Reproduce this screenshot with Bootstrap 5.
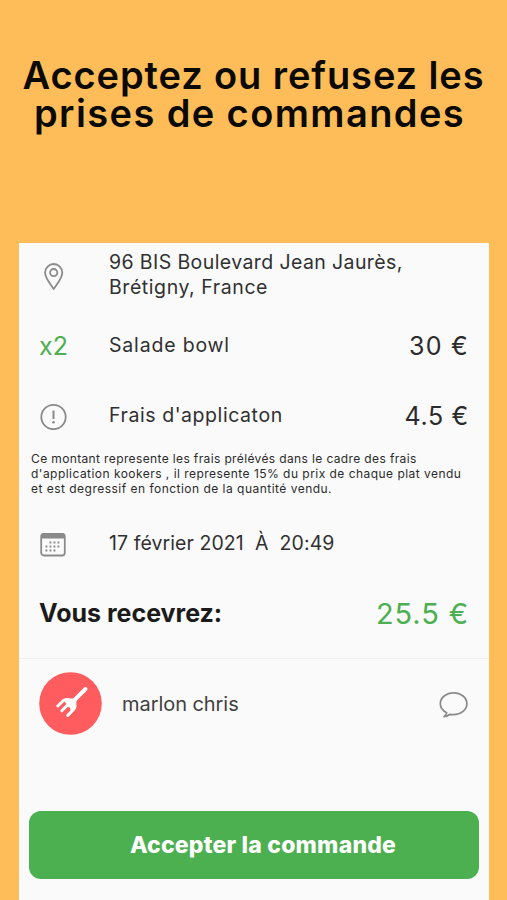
<!DOCTYPE html>
<html lang="fr">
<head>
<meta charset="utf-8">
<meta name="viewport" content="width=device-width, initial-scale=1">
<title>Commande</title>
<link href="https://cdn.jsdelivr.net/npm/bootstrap@5.3.0/dist/css/bootstrap.min.css" rel="stylesheet">
<style>
body{background:#ffbd59;font-family:Inter,"Open Sans",sans-serif;color:#303030;height:900px;overflow:hidden}
.headline{height:243px;padding-top:56px;font-size:38px;line-height:38px;font-weight:600;color:#0b0903;white-space:nowrap}
.headline .l1{letter-spacing:.9px}
.headline .l2{letter-spacing:1.4px;padding-right:8px}
.sheet{width:470px;height:657px;margin-left:19px;background:#fafafa;white-space:nowrap}
.line{height:70px;padding:0 20px 0 20px}
.lead-col{width:70px;flex:none}
.label{font-size:19.5px;line-height:25px}
.a1{letter-spacing:.4px}
.a2,.t2{letter-spacing:.57px}
.t1{letter-spacing:.82px}
.t3{letter-spacing:.08px}
.address{height:67px;padding-top:7px}
.qty{font-size:25px;padding-top:3px;color:#4caf50}
.price{font-size:25px;padding-top:3px;color:#2a2a2a}
.p1{letter-spacing:1.3px}
.p2{letter-spacing:.7px}
.note{padding:1px 0 0 12px;height:58px;font-size:12px;line-height:15px;color:#2b2b2b}
.n1{letter-spacing:.37px}
.n2{letter-spacing:.465px}
.n3{letter-spacing:.48px}
.total{height:80px;padding-bottom:8px}
.total-label{font-size:25px;font-weight:700;color:#1b1b1b}
.total-price{font-size:29px;letter-spacing:.9px;color:#4caf50}
.user{height:91px;padding-right:21px;padding-bottom:1px;border-top:1px solid #efefef}
.user-name{margin-left:20px;font-size:20px;letter-spacing:-.06px;color:#404040}
.accept{display:block;width:450px;height:68px;margin:62px 0 0 10px;border:0;border-radius:12px;background:#4caf50;color:#fff;font-size:23px;letter-spacing:.2px;font-weight:800;padding:0 0 0 18px}
.accept:hover{background:#4caf50;color:#fff}
svg{display:block;flex:none}
</style>
<script src="https://cdn.jsdelivr.net/npm/bootstrap@5.3.0/dist/js/bootstrap.bundle.min.js"></script>
</head>
<body>
<h1 class="headline text-center mb-0"><span class="l1 d-block">Acceptez ou refusez les</span><span class="l2 d-block">prises de commandes</span></h1>
<main class="sheet">
  <div class="line address d-flex">
    <div class="lead-col"><svg width="30" height="52" viewBox="0 0 30 52" fill="none" stroke="#8a8a8a" stroke-width="1.8"><path d="M14.7 39C11.5 34 6.1 28.5 6.1 22.6a8.6 8.6 0 0 1 17.2 0C23.3 28.5 17.9 34 14.7 39Z" stroke-linejoin="round"/><circle cx="14.7" cy="22.6" r="3.6"/></svg></div>
    <div class="label"><div class="a1">96 BIS Boulevard Jean Jaurès,</div><div class="a2">Brétigny, France</div></div>
  </div>
  <div class="line d-flex align-items-center">
    <div class="lead-col qty">x2</div><div class="label t1">Salade bowl</div><div class="price p1 ms-auto">30 €</div>
  </div>
  <div class="line d-flex align-items-center">
    <div class="lead-col"><svg width="30" height="30" viewBox="0 0 30 30" fill="none" stroke="#8a8a8a" stroke-width="1.8"><circle cx="14.5" cy="17" r="12.2"/><path d="M14.5 10.5v8.5" stroke-width="2"/><circle cx="14.5" cy="22.2" r="1.3" fill="#8a8a8a" stroke="none"/></svg></div>
    <div class="label t2">Frais d'applicaton</div><div class="price p2 ms-auto">4.5 €</div>
  </div>
  <div class="note"><div class="n1">Ce montant represente les frais prélévés dans le cadre des frais</div><div class="n2">d'application kookers , il represente 15% du prix de chaque plat vendu</div><div class="n3">et est degressif en fonction de la quantité vendu.</div></div>
  <div class="line d-flex align-items-center">
    <div class="lead-col"><svg width="30" height="30" viewBox="0 0 30 30"><rect x="2.2" y="5.9" width="23.6" height="21.6" rx="2.8" fill="none" stroke="#8a8a8a" stroke-width="1.8"/><path d="M2 10.5V8a3 3 0 0 1 3-3h18a3 3 0 0 1 3 3v2.5Z" fill="#8a8a8a"/><path d="M10.500 14.500h12M6.500 18.500h16M6.500 22.500h12" stroke="#8a8a8a" stroke-width="1.900" stroke-dasharray="1.900 2.100"/></svg></div>
    <div class="label t3">17 février 2021&nbsp; À&nbsp; 20:49</div>
  </div>
  <div class="line total d-flex align-items-center">
    <div class="total-label">Vous recevrez:</div><div class="total-price ms-auto">25.5 €</div>
  </div>
  <div class="line user d-flex align-items-center">
    <svg width="63" height="63" viewBox="0 0 63 63"><circle cx="31.5" cy="31.5" r="31.3" fill="#ff5c5f"/><g fill="none" stroke="#fff" stroke-linecap="round" stroke-linejoin="round"><path d="M46.500 17 35 28.500" stroke-width="3.900"/><path d="M24.500 28.500 18.800 34M28 33.500 22.800 38.800M34 38 28.700 43.500" stroke-width="3"/></g><path d="M23.500 27.400Q27.500 25 31.500 26.500L35.500 26.500 37.500 28.500 37.300 32Q38.300 36 35 39.200L31.700 38.500 30.800 35.500 27.500 34.500 27.200 31.500Z" fill="#fff"/></svg>
    <div class="user-name">marlon chris</div>
    <svg class="ms-auto mt-1" width="29" height="29" viewBox="0 0 29 29" fill="none" stroke="#8a8a8a" stroke-width="1.7" stroke-linejoin="round"><path d="M7.700 21.700C3.700 19.700 1.300 16.500 1.300 12.700 1.300 6.700 7.200 1.800 14.600 1.800S27.900 6.700 27.900 12.700 22 23.600 14.600 23.600q-1.900 0-3.600-.3Q8.300 25.300 5 25.600 7.300 24 7.700 21.700Z"/></svg>
  </div>
  <button class="btn accept" type="button"><span class="acc">Accepter la commande</span></button>
</main>
</body>
</html>
